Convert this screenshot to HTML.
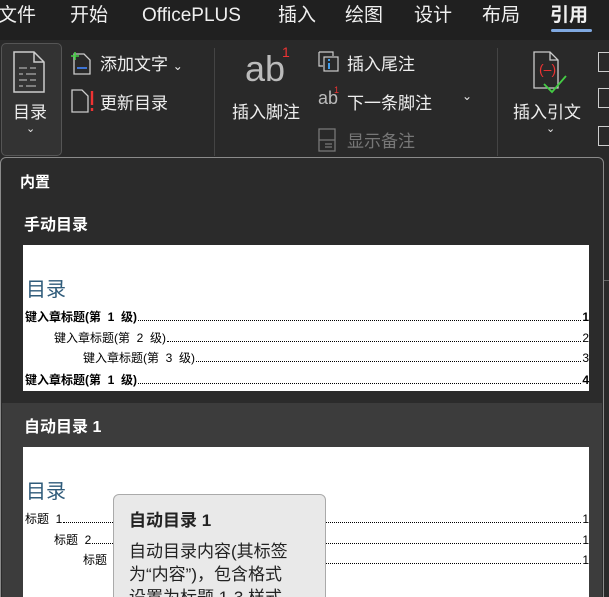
<html><head><style>
*{margin:0;padding:0;box-sizing:border-box}
html,body{width:609px;height:597px;overflow:hidden}
body{background:#292929;font-family:"Liberation Sans","Noto Sans CJK SC",sans-serif;color:#e8e8e8;position:relative}
.a{position:absolute;white-space:nowrap}
.tab{font-size:19px;color:#f0f0f0;line-height:30px}
.rb{font-size:17px;color:#eee}
.toc{position:absolute;left:23px;width:566px;background:#fff;color:#000;font-size:12px;overflow:hidden}
.l{position:absolute;left:2px;right:0;display:flex;align-items:baseline;height:16px}
.l .d{flex:1;border-bottom:1px dotted #000;margin:0 1px;height:10px}
.l b,.l span{white-space:pre}
</style></head><body>
<div class="a" style="left:0;top:0;width:609px;height:40px;background:#202020"></div>
<div class="a tab" style="left:-2px;top:1px">文件</div>
<div class="a tab" style="left:70px;top:1px">开始</div>
<div class="a tab" style="left:142px;top:1px">OfficePLUS</div>
<div class="a tab" style="left:278px;top:1px">插入</div>
<div class="a tab" style="left:345px;top:1px">绘图</div>
<div class="a tab" style="left:414px;top:1px">设计</div>
<div class="a tab" style="left:482px;top:1px">布局</div>
<div class="a tab" style="left:550px;top:1px;font-weight:bold">引用</div>
<div class="a" style="left:551px;top:29px;width:41px;height:3px;background:#7fa8e0;border-radius:2px"></div>
<div class="a" style="left:1px;top:43px;width:61px;height:113px;border:1px solid #555;border-radius:5px;background:#333"></div>
<svg class="a" style="left:12px;top:50px" width="34" height="44"><path d="M2 2h20l10 10v30H2z M22 2v10h10" fill="none" stroke="#ccc" stroke-width="1.5"/><path d="M7 18h8M18 18h6M7 24h4M14 24h10M7 30h8M18 30h6M7 36h4M14 36h10" stroke="#aaa" stroke-width="1.3"/></svg>
<div class="a rb" style="left:13px;top:98px">目录</div>
<div class="a" style="left:26px;top:122px;font-size:11px">⌄</div>
<svg class="a" style="left:70px;top:50px" width="22" height="26"><path d="M4 4h10l6 6v14H4z" fill="none" stroke="#ccc" stroke-width="1.3"/><path d="M1 6h8M5 2v8" stroke="#4c4" stroke-width="1.6"/><path d="M7 18h10" stroke="#48f" stroke-width="1.6"/></svg>
<div class="a rb" style="left:100px;top:50px">添加文字 <span style="font-size:12px">⌄</span></div>
<svg class="a" style="left:70px;top:88px" width="26" height="26"><path d="M2 2h10l6 6v16H2z" fill="none" stroke="#ccc" stroke-width="1.3"/><path d="M22 3v14M22 20v3" stroke="#e33" stroke-width="2.4"/></svg>
<div class="a rb" style="left:100px;top:89px">更新目录</div>
<div class="a" style="left:214px;top:48px;width:1px;height:108px;background:#444"></div>
<div class="a" style="left:245px;top:48px;font-size:36px;color:#bbb;font-weight:300">ab</div>
<div class="a" style="left:282px;top:44px;font-size:14px;color:#e33">1</div>
<div class="a rb" style="left:232px;top:98px">插入脚注</div>
<svg class="a" style="left:317px;top:50px" width="24" height="24"><path d="M2 2h14v4M2 2v14h4" fill="none" stroke="#ccc" stroke-width="1.2"/><rect x="7" y="7" width="14" height="14" fill="none" stroke="#ccc" stroke-width="1.2"/><path d="M12 9v2M12 13v6" stroke="#4af" stroke-width="1.8"/></svg>
<div class="a rb" style="left:347px;top:50px">插入尾注</div>
<div class="a" style="left:318px;top:88px;font-size:18px;color:#bbb">ab</div><div class="a" style="left:334px;top:85px;font-size:9px;color:#e33">1</div>
<div class="a rb" style="left:347px;top:89px">下一条脚注</div>
<div class="a" style="left:462px;top:89px;font-size:12px">⌄</div>
<svg class="a" style="left:317px;top:127px" width="22" height="26"><rect x="2" y="2" width="16" height="22" fill="none" stroke="#777" stroke-width="1.3"/><path d="M2 13h16M8 17h7M8 20h7" stroke="#777" stroke-width="1.3"/></svg>
<div class="a rb" style="left:347px;top:127px;color:#777">显示备注</div>
<div class="a" style="left:497px;top:48px;width:1px;height:108px;background:#444"></div>
<svg class="a" style="left:530px;top:50px" width="46" height="46"><path d="M4 2h16l8 8v28H4z M20 2v8h8" fill="none" stroke="#ccc" stroke-width="1.3"/><text x="9" y="24" font-size="14" fill="#e33" font-family="Liberation Sans">(–)</text><path d="M14 34l8 8l14-16" fill="none" stroke="#4c4" stroke-width="1.8"/></svg>
<div class="a rb" style="left:513px;top:98px">插入引文</div>
<div class="a" style="left:546px;top:122px;font-size:11px">⌄</div>
<div class="a" style="left:598px;top:52px;width:11px;height:20px;border:1.5px solid #ccc;border-right:none"></div>
<div class="a" style="left:598px;top:88px;width:11px;height:20px;border:1.5px solid #ccc;border-right:none"></div>
<div class="a" style="left:598px;top:126px;width:11px;height:20px;border:1.5px solid #ccc;border-right:none"></div>
<div class="a" style="left:0;top:157px;width:604px;height:450px;background:#2b2b2b;border:1.5px solid #8a8a8a;border-radius:6px"></div>
<div class="a" style="left:2px;top:403px;width:600px;height:200px;background:#3c3c3c"></div>
<div class="a" style="left:20px;top:171px;font-size:15px;font-weight:bold;color:#fff">内置</div>
<div class="a" style="left:24px;top:211px;font-size:16px;font-weight:bold;color:#fff">手动目录</div>
<div class="toc" style="top:245px;height:146px">
<div class="a" style="left:3px;top:28px;font-size:20px;color:#2f5b7a">目录</div>
<div class="l" style="top:63px"><b>键入章标题(第  1  级)</b><i class="d"></i><b>1</b></div>
<div class="l" style="top:84px;left:31px"><span>键入章标题(第  2  级)</span><i class="d"></i><span>2</span></div>
<div class="l" style="top:104px;left:60px"><span>键入章标题(第  3  级)</span><i class="d"></i><span>3</span></div>
<div class="l" style="top:126px"><b>键入章标题(第  1  级)</b><i class="d"></i><b>4</b></div>
</div>
<div class="a" style="left:24px;top:413px;font-size:16px;font-weight:bold;color:#fff">自动目录 1</div>
<div class="toc" style="top:447px;height:160px">
<div class="a" style="left:3px;top:28px;font-size:20px;color:#2f5b7a">目录</div>
<div class="l" style="top:63px"><span>标题  1</span><i class="d"></i><span>1</span></div>
<div class="l" style="top:84px;left:31px"><span>标题  2</span><i class="d"></i><span>1</span></div>
<div class="l" style="top:104px;left:60px"><span>标题  3</span><i class="d"></i><span>1</span></div>
</div>
<div class="a" style="left:113px;top:494px;width:213px;height:120px;background:#e9e9e9;border:1.5px solid #aaa;border-radius:6px;color:#222">
<div style="position:absolute;left:15px;top:11px;font-size:17px;font-weight:bold">自动目录 1</div>
<div style="position:absolute;left:15px;top:45px;font-size:17px;line-height:23px">自动目录内容(其标签<br>为“内容”)，包含格式<br>设置为标题 1-3 样式</div>
</div>
<div class="a" style="left:604px;top:280px;width:5px;height:1px;background:#666"></div>
</body></html>
